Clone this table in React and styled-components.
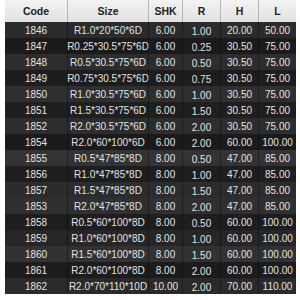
import React from "react";
import styled, { createGlobalStyle } from "styled-components";

const Global = createGlobalStyle`
  html, body { margin: 0; padding: 0; background: #ffffff; }
  body { font-family: "Liberation Sans", Arial, sans-serif; }
`;

const COLS = "62px 81px 34px 38px 38px 38px";

const Table = styled.div`
  display: flex;
  flex-direction: column;
  width: 291px;
  margin-left: 5px;
`;

const HeaderRow = styled.div`
  display: grid;
  grid-template-columns: ${COLS};
  height: 22px;
  background: linear-gradient(#f3f3f3, #e1e1e1);
`;

const HeadCell = styled.div`
  display: flex;
  align-items: center;
  justify-content: center;
  font-size: 10.5px;
  font-weight: bold;
  color: #1e1e1e;
  border-left: ${(p) => (p.$first ? "none" : "1px solid #b4b4b4")};
`;

const Row = styled.div`
  display: grid;
  grid-template-columns: ${COLS};
  height: 16px;
  background: ${(p) => p.$bg};
`;

const Cell = styled.div`
  display: flex;
  align-items: center;
  justify-content: center;
  font-size: 10px;
  color: #e2e2e2;
  white-space: nowrap;
  padding-top: ${(p) => (p.$low ? "3px" : "0")};
  border-left: ${(p) => (p.$first ? "none" : "1px solid rgba(0,0,0,0.35)")};
`;

const rows = [
  ["1846", "R1.0*20*50*6D", "6.00", "1.00", "20.00", "50.00", "#2b2b2b"],
  ["1847", "R0.25*30.5*75*6D", "6.00", "0.25", "30.50", "75.00", "#1b1b1b"],
  ["1848", "R0.5*30.5*75*6D", "6.00", "0.50", "30.50", "75.00", "#2d2d2d"],
  ["1849", "R0.75*30.5*75*6D", "6.00", "0.75", "30.50", "75.00", "#1d1d1d"],
  ["1850", "R1.0*30.5*75*6D", "6.00", "1.00", "30.50", "75.00", "#2f2f2f"],
  ["1851", "R1.5*30.5*75*6D", "6.00", "1.50", "30.50", "75.00", "#1f1f1f"],
  ["1852", "R2.0*30.5*75*6D", "6.00", "2.00", "30.50", "75.00", "#2d2d2d"],
  ["1854", "R2.0*60*100*6D", "6.00", "2.00", "60.00", "100.00", "#1b1b1b"],
  ["1855", "R0.5*47*85*8D", "8.00", "0.50", "47.00", "85.00", "#333333"],
  ["1856", "R1.0*47*85*8D", "8.00", "1.00", "47.00", "85.00", "#1e1e1e"],
  ["1857", "R1.5*47*85*8D", "8.00", "1.50", "47.00", "85.00", "#2c2c2c"],
  ["1853", "R2.0*47*85*8D", "8.00", "2.00", "47.00", "85.00", "#303030"],
  ["1858", "R0.5*60*100*8D", "8.00", "0.50", "60.00", "100.00", "#1e1e1e"],
  ["1859", "R1.0*60*100*8D", "8.00", "1.00", "60.00", "100.00", "#262626"],
  ["1860", "R1.5*60*100*8D", "8.00", "1.50", "60.00", "100.00", "#323232"],
  ["1861", "R2.0*60*100*8D", "8.00", "2.00", "60.00", "100.00", "#1c1c1c"],
  ["1862", "R2.0*70*110*10D", "10.00", "2.00", "70.00", "110.00", "#2a2a2a"],
];

const headers = ["Code", "Size", "SHK", "R", "H", "L"];

export default function App() {
  return (
    <>
      <Global />
      <Table>
        <HeaderRow>
          {headers.map((h, i) => (
            <HeadCell key={h} $first={i === 0}>
              {h}
            </HeadCell>
          ))}
        </HeaderRow>
        {rows.map((r) => (
          <Row key={r[0]} $bg={r[6]}>
            {r.slice(0, 6).map((v, i) => (
              <Cell key={i} $first={i === 0} $low={i === 3}>
                {v}
              </Cell>
            ))}
          </Row>
        ))}
      </Table>
    </>
  );
}
